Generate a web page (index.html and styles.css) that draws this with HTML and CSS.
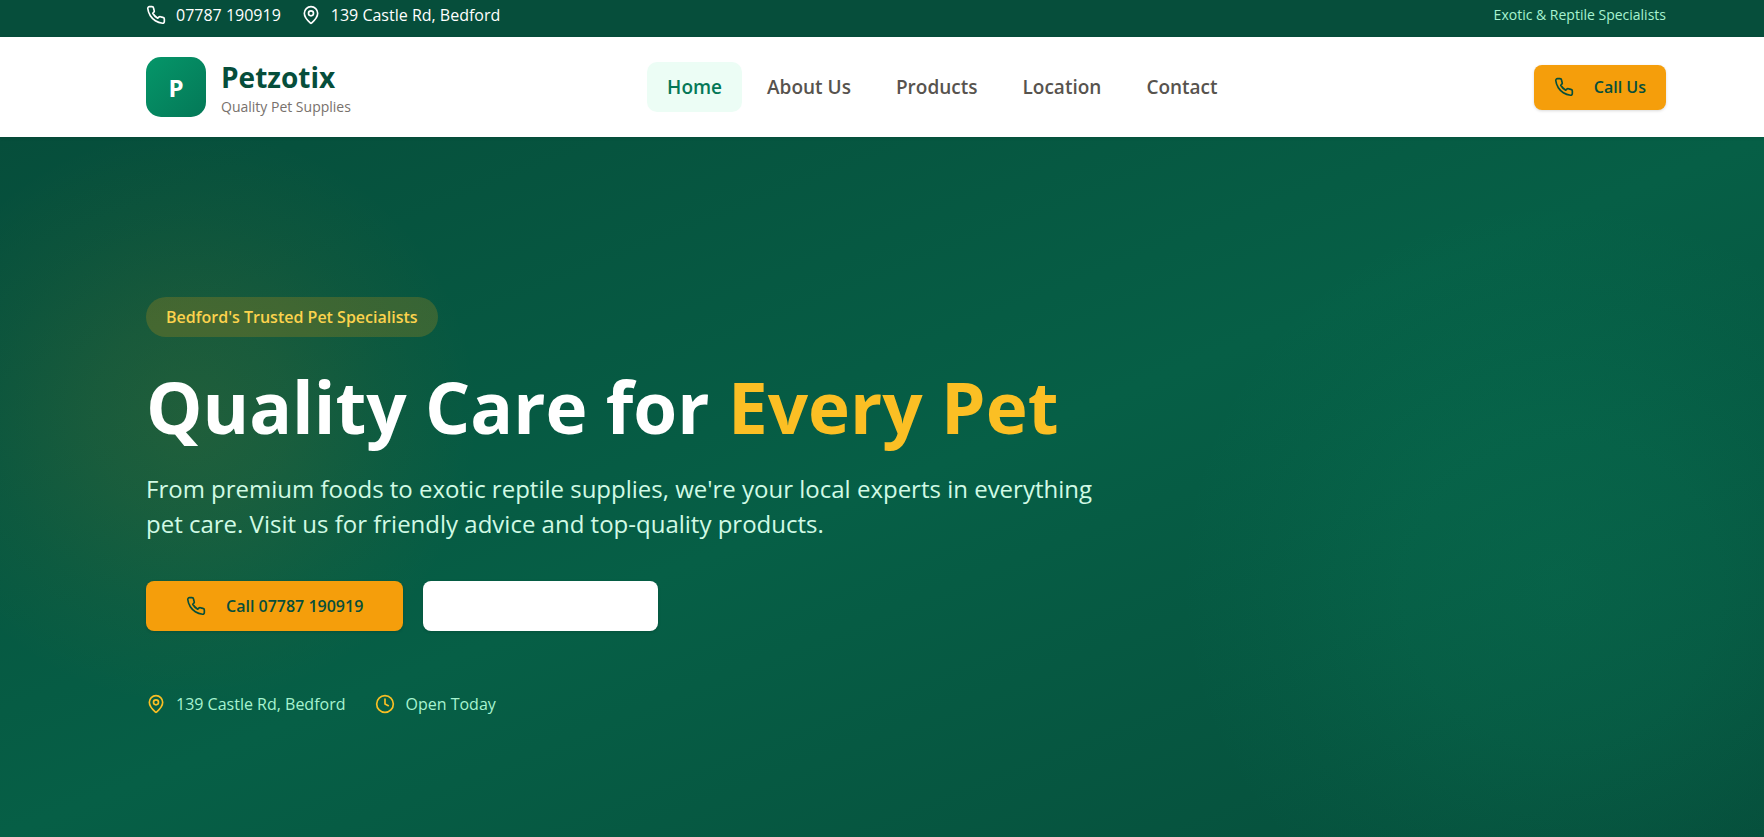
FILE: index.html
```html
<!DOCTYPE html>
<html lang="en">
  <head>
    <meta charset="utf-8">
    <meta name="viewport" content="width=device-width, initial-scale=1">
    <title>Petzotix</title>
    <link rel="stylesheet" href="styles.css">
  </head>
  <body>
    <svg class="sprite" aria-hidden="true">
      <symbol id="phone" viewBox="0 0 24 24">
        <path d="M22 16.92v3a2 2 0 0 1-2.18 2 19.79 19.79 0 0 1-8.63-3.07 19.5 19.5 0 0 1-6-6 19.79 19.79 0 0 1-3.07-8.67A2 2 0 0 1 4.11 2h3a2 2 0 0 1 2 1.72 12.84 12.84 0 0 0 .7 2.81 2 2 0 0 1-.45 2.11L8.09 9.91a16 16 0 0 0 6 6l1.27-1.27a2 2 0 0 1 2.11-.45 12.84 12.84 0 0 0 2.81.7A2 2 0 0 1 22 16.92z"/>
      </symbol>
      <symbol id="pin" viewBox="0 0 24 24">
        <path d="M20 10c0 4.993-5.539 10.193-7.399 11.799a1 1 0 0 1-1.202 0C9.539 20.193 4 14.993 4 10a8 8 0 0 1 16 0"/>
        <circle cx="12" cy="10" r="3"/>
      </symbol>
      <symbol id="clock" viewBox="0 0 24 24">
        <circle cx="12" cy="12" r="10"/>
        <path d="M12 6v6l4 2"/>
      </symbol>
    </svg>

    <div class="topbar">
      <div class="container topbar-row">
        <div class="topbar-contact">
          <a href="tel:07787190919" class="info"><svg class="icon"><use href="#phone"/></svg>07787 190919</a>
          <span class="info"><svg class="icon"><use href="#pin"/></svg>139 Castle Rd, Bedford</span>
        </div>
        <p class="tagline">Exotic &amp; Reptile Specialists</p>
      </div>
    </div>

    <header class="header">
      <div class="container header-row">
        <a href="#" class="brand">
          <span class="logo">P</span>
          <span class="brand-text">
            <span class="brand-name">Petzotix</span>
            <span class="brand-sub">Quality Pet Supplies</span>
          </span>
        </a>
        <nav class="nav">
          <a href="#" class="active">Home</a>
          <a href="#about">About Us</a>
          <a href="#products">Products</a>
          <a href="#location">Location</a>
          <a href="#contact">Contact</a>
        </nav>
        <a href="tel:07787190919" class="btn btn-small"><svg class="icon"><use href="#phone"/></svg>Call Us</a>
      </div>
    </header>

    <main class="hero">
      <div class="container">
        <div class="hero-content">
          <span class="badge">Bedford's Trusted Pet Specialists</span>
          <h1>Quality Care for <span class="highlight">Every Pet</span></h1>
          <p class="lead">From premium foods to exotic reptile supplies, we're your local experts in everything pet care. Visit us for friendly advice and top-quality products.</p>
          <div class="actions">
            <a href="tel:07787190919" class="btn"><svg class="icon"><use href="#phone"/></svg>Call 07787 190919</a>
            <a href="#products" class="btn btn-white" aria-label="Products"></a>
          </div>
          <div class="details">
            <span class="info"><svg class="icon"><use href="#pin"/></svg>139 Castle Rd, Bedford</span>
            <span class="info"><svg class="icon"><use href="#clock"/></svg>Open Today</span>
          </div>
        </div>
      </div>
    </main>
  </body>
</html>
```

FILE: styles.css
```css
* {
  box-sizing: border-box;
}
body {
  margin: 0;
  min-height: 100vh;
  display: flex;
  flex-direction: column;
  font-family: "Open Sans", "Noto Sans", sans-serif;
  font-size: 16px;
  background: #fff;
}
a {
  color: inherit;
  text-decoration: none;
}
h1, p {
  margin: 0;
}
.sprite {
  display: none;
}
.icon {
  width: 20px;
  height: 20px;
  flex: none;
  fill: none;
  stroke: currentColor;
  stroke-width: 2;
  stroke-linecap: round;
  stroke-linejoin: round;
}
.container {
  width: 100%;
  padding: 0 98px 0 146px;
}
.info {
  display: flex;
  align-items: center;
  gap: 10px;
}

/* top bar */
.topbar {
  background: #064e3b;
  color: #fff;
  padding: 3px 0 10px;
  line-height: 24px;
}
.topbar-row,
.header-row {
  display: flex;
  align-items: center;
  justify-content: space-between;
}
.topbar-contact {
  display: flex;
  gap: 20px;
}
.tagline {
  font-size: 14px;
  color: #a7f3d0;
}

/* header */
.header {
  position: relative;
  background: #fff;
  padding: 20px 0;
  box-shadow: 0 1px 3px rgba(0, 0, 0, 0.1);
}
.brand {
  display: flex;
  align-items: center;
  gap: 15px;
}
.logo {
  display: flex;
  align-items: center;
  justify-content: center;
  width: 60px;
  height: 60px;
  border-radius: 15px;
  background: linear-gradient(135deg, #059669, #047857);
  color: #fff;
  font-size: 24px;
  font-weight: 700;
}
.brand-text {
  display: flex;
  flex-direction: column;
}
.brand-name {
  font-size: 28px;
  line-height: 40px;
  font-weight: 700;
  color: #064e3b;
}
.brand-sub {
  font-size: 14px;
  line-height: 20px;
  color: #78716c;
}
.nav {
  display: flex;
  gap: 5px;
}
.nav a {
  padding: 10px 20px;
  border-radius: 10px;
  font-size: 19px;
  line-height: 30px;
  font-weight: 600;
  color: #57534e;
}
.nav a.active {
  background: #ecfdf5;
  color: #047857;
}

.btn {
  display: flex;
  align-items: center;
  justify-content: center;
  gap: 20px;
  height: 50px;
  padding: 0 40px;
  border-radius: 8px;
  background: #f59e0b;
  color: #064e3b;
  font-weight: 600;
  box-shadow: 0 1px 3px rgba(0, 0, 0, 0.15);
}
.btn-small {
  height: 45px;
  padding: 0 20px;
}
.btn-white {
  width: 235px;
  background: #fff;
}

/* hero */
.hero {
  flex: 1;
  display: flex;
  align-items: center;
  padding: 78px 0 40px;
  background:
    radial-gradient(circle at 190px 280px, rgba(245, 158, 11, 0.11), rgba(245, 158, 11, 0.08) 100px, rgba(245, 158, 11, 0.03) 200px, rgba(245, 158, 11, 0) 290px),
    radial-gradient(circle at calc(100% - 205px) 445px, rgba(16, 185, 129, 0.12), rgba(16, 185, 129, 0.09) 160px, rgba(16, 185, 129, 0.03) 290px, rgba(16, 185, 129, 0) 380px),
    linear-gradient(to bottom right, #064e3b, #065f46 50%, #064e3b);
}
.hero-content {
  max-width: 960px;
}
.badge {
  display: inline-block;
  padding: 0 20px;
  border-radius: 20px;
  line-height: 40px;
  font-weight: 600;
  color: #fcd34d;
  background: rgba(245, 158, 11, 0.2);
}
h1 {
  margin: 28px 0 22px;
  font-size: 71px;
  line-height: 84px;
  font-weight: 700;
  color: #fff;
}
.highlight {
  color: #fbbf24;
}
.lead {
  font-size: 24px;
  line-height: 35px;
  color: #d1fae5;
}
.actions {
  display: flex;
  gap: 20px;
  margin: 40px 0 62px;
}
.details {
  display: flex;
  gap: 30px;
  color: #a7f3d0;
}
.details .icon {
  color: #fbbf24;
}
```
